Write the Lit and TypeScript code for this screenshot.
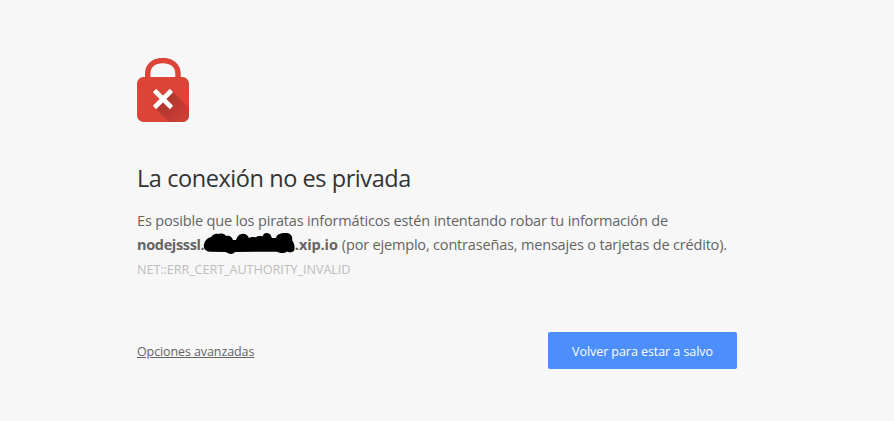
import { LitElement, html, css } from "lit";
import { customElement } from "lit/decorators.js";

@customElement("lock-icon")
class LockIcon extends LitElement {
  static styles = css`
    :host, svg { display: block; }
  `;
  render() {
    return html`
      <svg width="52" height="64" viewBox="0 0 52 64" aria-hidden="true">
        <defs>
          <linearGradient id="shade" x1="22" y1="38" x2="48" y2="64" gradientUnits="userSpaceOnUse">
            <stop offset="0" stop-color="#a8342c" />
            <stop offset="1" stop-color="#cf4036" />
          </linearGradient>
          <clipPath id="body"><rect y="19" width="52" height="45" rx="6.5" /></clipPath>
        </defs>
        <path d="M10.7 22V15.5C10.7 7.5 17 2.5 25.8 2.5S41 7.5 41 15.5V22" fill="none" stroke="#db4437" stroke-width="5.4" />
        <rect y="19" width="52" height="45" rx="6.5" fill="#db4437" />
        <path d="M35 33L62 60V80H48L17.500 49.500L26 41Z" fill="url(#shade)" clip-path="url(#body)" />
        <path d="M17.500 32.500L34.500 49.500M34.500 32.500L17.500 49.500" stroke="#fff" stroke-width="4.6" />
      </svg>
    `;
  }
}

@customElement("app-root")
class AppRoot extends LitElement {
  static styles = css`
    :host {
      display: block;
      box-sizing: border-box;
      height: 100vh;
      overflow: hidden;
      padding: 58px 157px 0 137px;
      background: #f7f7f7;
      color: #646464;
      font: 14.5px/24px "Open Sans", "Noto Sans", sans-serif;
      white-space: nowrap;
    }
    h1 {
      margin: 40px 0 15px;
      color: #333;
      font-size: 23.5px;
      font-weight: 400;
      line-height: 32px;
      letter-spacing: -0.43px;
    }
    p { margin: 0; }
    .line { display: flex; }
    .first { letter-spacing: -0.165px; }
    .host { letter-spacing: -0.35px; }
    .domain { letter-spacing: -0.1px; }
    .rest { margin-left: 4px; letter-spacing: -0.175px; }
    .scribble { display: block; flex: none; margin: 0 -1.500px 0 -1px; }
    .code { color: #bdbdbd; font-size: 12.7px; letter-spacing: -0.1px; }
    .actions {
      display: flex;
      width: 600px;
      margin-top: 51px;
      align-items: center;
      justify-content: space-between;
    }
    a {
      padding-top: 2px;
      color: #646464;
      font-size: 12.5px;
      letter-spacing: -0.1px;
      text-decoration: underline;
      text-underline-offset: 1px;
    }
    button {
      width: 189px;
      height: 37px;
      padding: 2px 0 0;
      border: 0;
      border-radius: 2px;
      background: #4c8efb;
      color: #fff;
      font: 500 12.5px/35px "Open Sans", "Noto Sans", sans-serif;
      letter-spacing: -0.06px;
    }
  `;
  render() {
    return html`
      <lock-icon></lock-icon>
      <h1><span>La conexión no es privada</span></h1>
      <p>
        <span class="line"><span class="first">Es posible que los piratas informáticos estén intentando robar tu información de</span></span>
        <span class="line"><b class="host">nodejsssl.</b><svg class="scribble" width="93" height="24" viewBox="0 0 93 24" aria-hidden="true">
          <path d="M1 15C0 9 4 5 8 4C10 1 13 0 16 1C19 0 22 1 23 3C27 2 29 4 30 7L33 7C34 4 36 1 39 1C43 0 45 3 46 5C49 3 52 5 53 4C56 2 59 4 60 3C60 -1 67 -1 68 3L69 5L73 5C74 0 80 0 83 0C88 0 90 4 89 7C92 11 92 16 91 18C88 20 85 19 84 18.500C81 21 77 20 74 18.700L32 19C30 22 25 21 23 19L7 18.700C4 18.700 2 17 1 15Z" />
        </svg><b class="domain">.xip.io</b><span class="rest">(por ejemplo, contraseñas, mensajes o tarjetas de crédito).</span></span>
      </p>
      <div class="code"><span>NET::ERR_CERT_AUTHORITY_INVALID</span></div>
      <div class="actions">
        <a>Opciones avanzadas</a>
        <button>Volver para estar a salvo</button>
      </div>
    `;
  }
}
